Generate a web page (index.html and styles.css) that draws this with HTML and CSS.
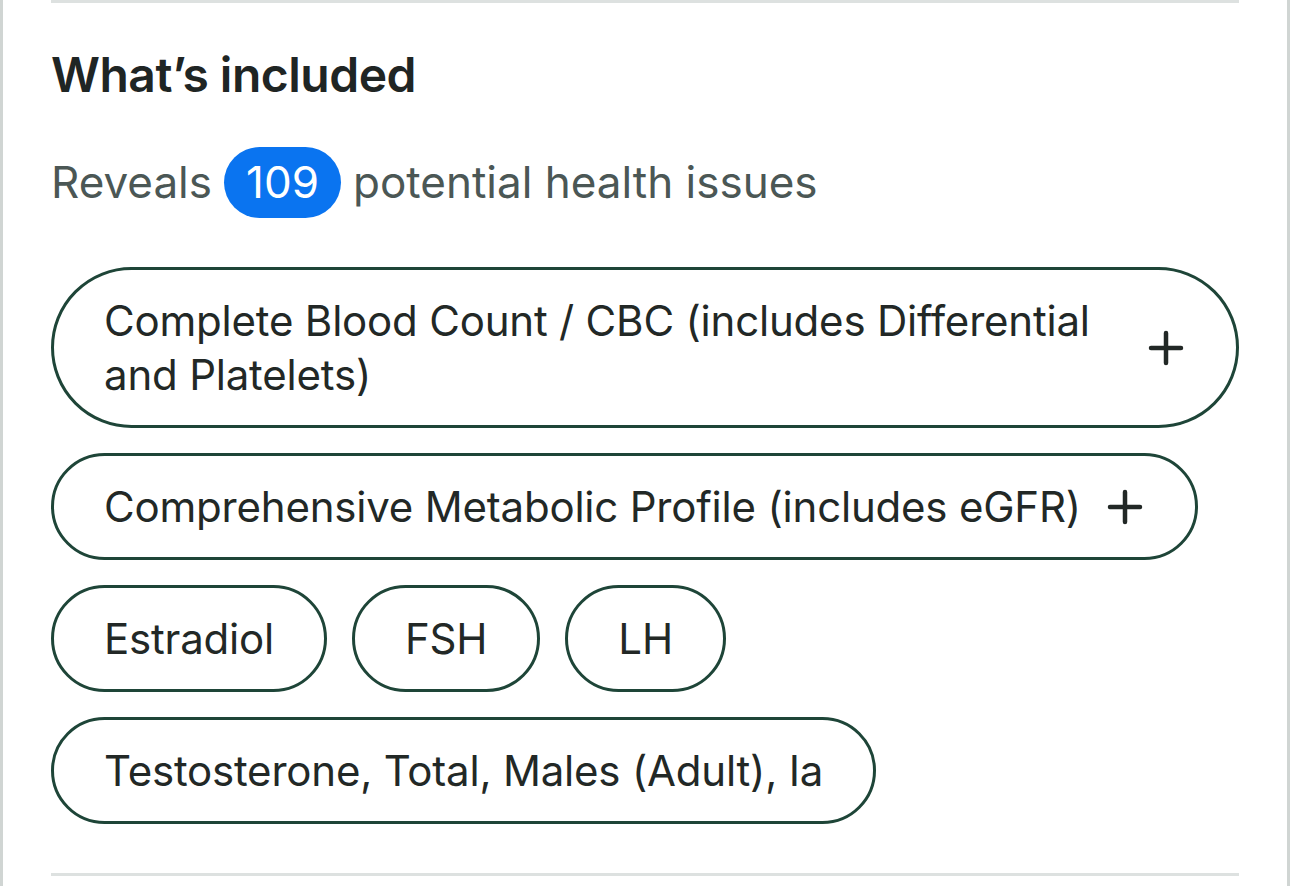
FILE: index.html
```html
<!DOCTYPE html>
<html lang="en">
<head>
<meta charset="utf-8">
<title>What's included</title>
<link rel="stylesheet" href="styles.css">
</head>
<body>
<div class="panel">
  <section class="section">
    <h2 class="title">What’s included</h2>
    <div class="reveals">
      <span>Reveals</span>
      <span class="badge">109</span>
      <span>potential health issues</span>
    </div>
    <ul class="pills">
      <li class="pill pill-wide">
        <span class="pill-text">Complete Blood Count / CBC (includes Differential and Platelets)</span>
        <svg class="plus" viewBox="0 0 40 40" aria-hidden="true"><path d="M20 5v30M5 20h30"/></svg>
      </li>
      <li class="pill">
        <span class="pill-text">Comprehensive Metabolic Profile (includes eGFR)</span>
        <svg class="plus" viewBox="0 0 40 40" aria-hidden="true"><path d="M20 5v30M5 20h30"/></svg>
      </li>
      <li class="pill"><span class="pill-text">Estradiol</span></li>
      <li class="pill"><span class="pill-text">FSH</span></li>
      <li class="pill"><span class="pill-text">LH</span></li>
      <li class="pill"><span class="pill-text">Testosterone, Total, Males (Adult), Ia</span></li>
    </ul>
  </section>
</div>
</body>
</html>
```

FILE: styles.css
```css
html, body {
  margin: 0;
  padding: 0;
  background: #ffffff;
}

body {
  font-family: Inter, "Noto Sans", "Liberation Sans", sans-serif;
  color: #222826;
}

.panel {
  height: 886px;
  box-sizing: border-box;
  border-left: 3px solid #d0d5d3;
  border-right: 3px solid #d0d5d3;
  padding: 0 48px;
  overflow: hidden;
}

.section {
  border-top: 3px solid #dde1e0;
  border-bottom: 3px solid #dde1e0;
  padding: 43px 0 49px;
}

.title {
  margin: 0 0 43px;
  font-size: 48px;
  line-height: 58px;
  font-weight: 600;
  color: #1f2524;
  letter-spacing: -0.5px;
}

.reveals {
  display: flex;
  align-items: center;
  gap: 12px;
  height: 71px;
  font-size: 44px;
  line-height: 71px;
  color: #4b5755;
}

.badge {
  display: inline-flex;
  align-items: center;
  justify-content: center;
  height: 71px;
  padding: 0 22px;
  border-radius: 36px;
  background: #0a74f0;
  color: #ffffff;
}

.pills {
  list-style: none;
  margin: 49px 0 0;
  padding: 0;
  display: flex;
  flex-wrap: wrap;
  gap: 25px;
}

.pill {
  display: inline-flex;
  align-items: center;
  gap: 24px;
  border: 3px solid #1e4538;
  border-radius: 60px;
  padding: 24px 50px 23px;
  font-size: 42px;
  line-height: 54px;
  letter-spacing: -0.2px;
  color: #222826;
}

.pill-wide {
  flex: 1 1 100%;
  border-radius: 81px;
}

.pill-wide .pill-text {
  flex: 1;
}

.plus {
  width: 40px;
  height: 40px;
  flex: none;
  fill: none;
  stroke: #222826;
  stroke-width: 4.5;
  stroke-linecap: round;
}
```
